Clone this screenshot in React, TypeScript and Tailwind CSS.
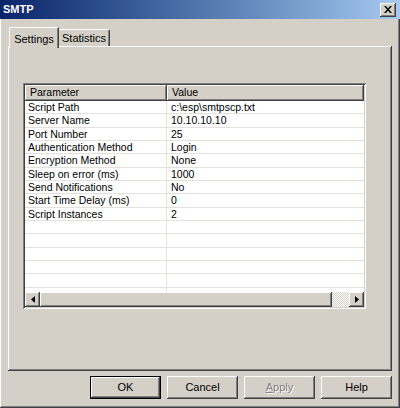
import React from 'react'

const raised =
  'shadow-[inset_-1px_-1px_#404040,inset_1px_1px_#ffffff,inset_-2px_-2px_#808080,inset_2px_2px_#d4d0c8]'
const sunken =
  'shadow-[inset_1px_1px_#808080,inset_-1px_-1px_#ffffff,inset_2px_2px_#404040,inset_-2px_-2px_#d4d0c8]'

const rows: [string, string][] = [
  ['Script Path', 'c:\\esp\\smtpscp.txt'],
  ['Server Name', '10.10.10.10'],
  ['Port Number', '25'],
  ['Authentication Method', 'Login'],
  ['Encryption Method', 'None'],
  ['Sleep on error (ms)', '1000'],
  ['Send Notifications', 'No'],
  ['Start Time Delay (ms)', '0'],
  ['Script Instances', '2'],
  ['', ''],
  ['', ''],
  ['', ''],
  ['', ''],
  ['', ''],
  ['', ''],
]

function Button({ label, isDefault, disabled }: { label: React.ReactNode; isDefault?: boolean; disabled?: boolean }) {
  if (isDefault) {
    return (
      <div className="w-[71px] h-[23px] border border-black">
        <div className={`w-full h-full flex items-center justify-center ${raised}`}>{label}</div>
      </div>
    )
  }
  return (
    <div
      className={`w-[71px] h-[23px] flex items-center justify-center ${raised} ${
        disabled ? 'text-[#808080] [text-shadow:1px_1px_#ffffff]' : ''
      }`}
    >
      {label}
    </div>
  )
}

export default function App() {
  return (
    <div
      className={`w-[400px] h-[408px] bg-[#d4d0c8] flex flex-col px-[3px] pb-[3px] text-black text-[11px] font-['Liberation_Sans',Arial,sans-serif] ${raised}`}
    >
      {/* title bar */}
      <div className="h-[19px] flex items-center justify-between bg-gradient-to-r from-[#0a246a] to-[#a6caf0] -mx-[3px] pl-[3px] pr-[4px]">
        <span className="text-white font-bold text-[11px] leading-none">SMTP</span>
        <div className={`w-[16px] h-[14px] flex items-center justify-center bg-[#d4d0c8] ${raised}`}>
          <svg width="8" height="7" viewBox="0 0 8 7">
            <path d="M0 0h2l2 2.5L6 0h2L5 3.5 8 7H6L4 4.5 2 7H0l3-3.5z" fill="#000" />
          </svg>
        </div>
      </div>

      <div className="flex flex-col px-[5px] pt-[8px]">
        {/* tabs */}
        <div className="flex items-start h-[19px] relative z-10 pl-[1px]">
          <div className="w-[50px] h-[21px] bg-[#d4d0c8] border-l border-t border-white rounded-tl-[2px] border-r border-r-[#404040] shadow-[inset_-1px_0_#808080] flex items-start justify-center pt-[3px] text-[11px]">
            Settings
          </div>
          <div className="mt-[2px] w-[51px] h-[17px] border-t border-white border-r border-r-[#404040] rounded-tr-[2px] shadow-[inset_-1px_0_#808080] flex items-center justify-center text-[11px]">
            Statistics
          </div>
        </div>

        {/* panel */}
        <div className={`h-[325px] pt-[37px] pl-[15px] ${raised}`}>
          <div className={`w-[343px] h-[226px] p-[2px] bg-white flex flex-col text-[10.5px] ${sunken}`}>
            <div className="flex h-[16px] shrink-0 bg-[#d4d0c8]">
              <div className={`w-[142px] pl-[5px] flex items-center ${raised}`}>Parameter</div>
              <div className={`flex-1 pl-[5px] flex items-center ${raised}`}>Value</div>
            </div>
            <div className="flex-1 overflow-hidden">
              {rows.map(([k, v], i) => (
                <div
                  key={i}
                  className={`flex border-b border-[#e4e1dc] ${i % 3 === 1 ? 'h-[14px]' : 'h-[13px]'}`}
                >
                  <div className="w-[142px] pl-[3px] border-r border-[#e4e1dc] leading-[13px] whitespace-nowrap">{k}</div>
                  <div className="flex-1 pl-[4px] leading-[13px] whitespace-nowrap">{v}</div>
                </div>
              ))}
            </div>
            <div className="flex h-[15px] shrink-0 bg-[#d4d0c8]">
              <div className={`w-[15px] flex items-center justify-center ${raised}`}>
                <svg width="4" height="7" viewBox="0 0 4 7">
                  <path d="M4 0v7L0 3.5z" fill="#000" />
                </svg>
              </div>
              <div className={`w-[292px] bg-[#d4d0c8] ${raised}`} />
              <div className="flex-1 bg-[repeating-conic-gradient(#ffffff_0_25%,#d4d0c8_0_50%)] bg-[length:2px_2px]" />
              <div className={`w-[15px] flex items-center justify-center ${raised}`}>
                <svg width="4" height="7" viewBox="0 0 4 7">
                  <path d="M0 0v7l4-3.5z" fill="#000" />
                </svg>
              </div>
            </div>
          </div>
        </div>

        {/* buttons */}
        <div className="flex justify-end gap-[6px] mt-[5px]">
          <Button label="OK" isDefault />
          <Button label="Cancel" />
          <Button
            label={
              <span>
                <span className="underline">A</span>pply
              </span>
            }
            disabled
          />
          <Button label="Help" />
        </div>
      </div>
    </div>
  )
}
